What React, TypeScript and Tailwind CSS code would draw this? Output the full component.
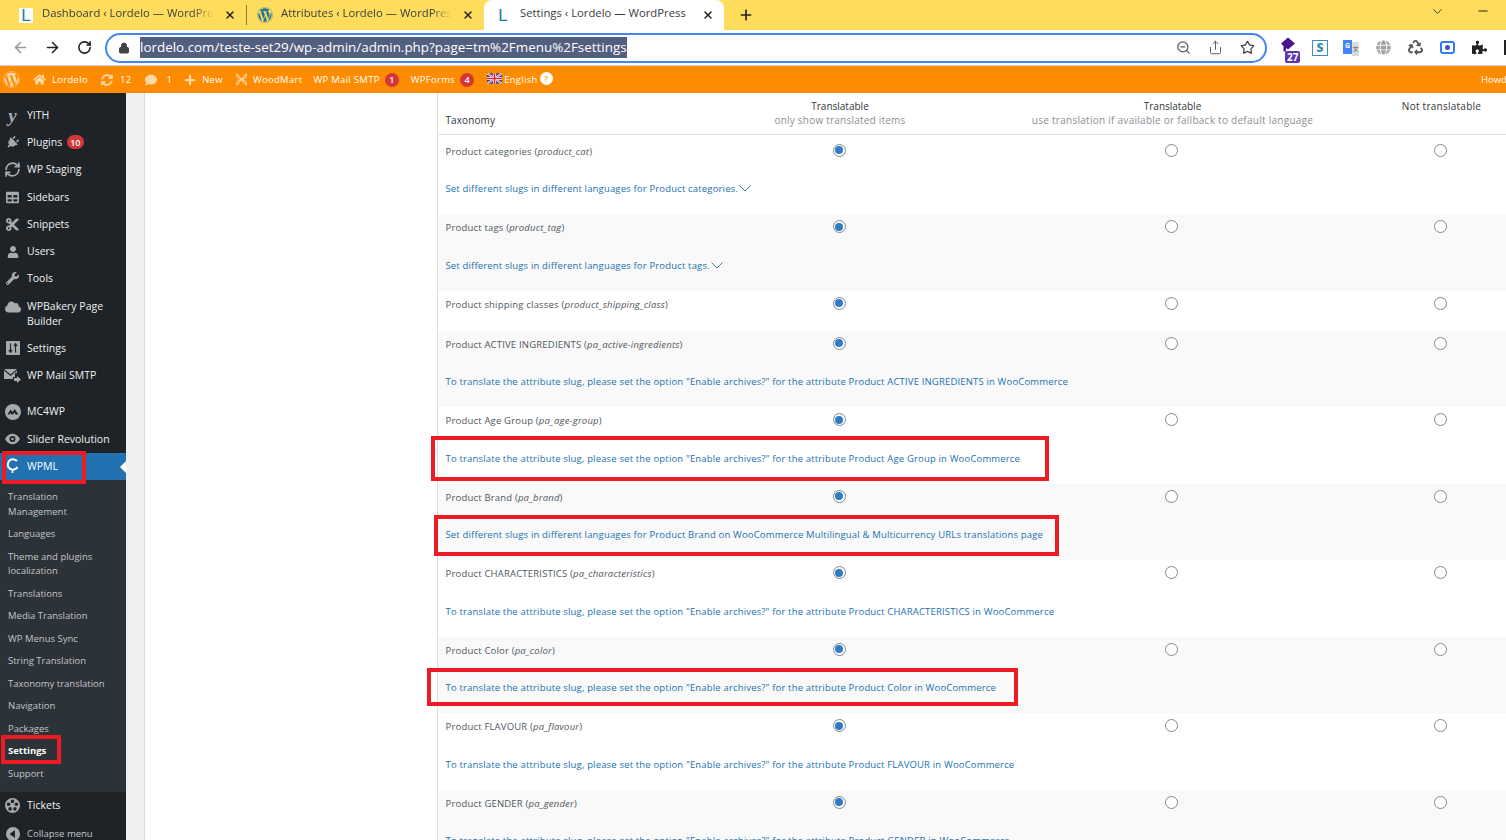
import { ArrowLeft, ArrowRight, RotateCw, RefreshCw, Lock, ZoomOut, Share, Star, X, Plus, ChevronDown, Minus } from "lucide-react"
import {
  FaWordpress, FaHome, FaSyncAlt, FaComment, FaPlus, FaPlug, FaUser, FaWrench, FaCloud, FaCut, FaTable,
  FaPuzzlePiece, FaRecycle, FaGlobe,
} from "react-icons/fa"

const font = { fontFamily: "'Open Sans', sans-serif" }

const rows = [
  { name: "Product categories", slug: "product_cat", link: "Set different slugs in different languages for Product categories.", chevron: true },
  { name: "Product tags", slug: "product_tag", link: "Set different slugs in different languages for Product tags.", chevron: true },
  { name: "Product shipping classes", slug: "product_shipping_class" },
  { name: "Product ACTIVE INGREDIENTS", slug: "pa_active-ingredients", link: 'To translate the attribute slug, please set the option "Enable archives?" for the attribute Product ACTIVE INGREDIENTS in WooCommerce' },
  { name: "Product Age Group", slug: "pa_age-group", link: 'To translate the attribute slug, please set the option "Enable archives?" for the attribute Product Age Group in WooCommerce' },
  { name: "Product Brand", slug: "pa_brand", link: "Set different slugs in different languages for Product Brand on WooCommerce Multilingual & Multicurrency URLs translations page" },
  { name: "Product CHARACTERISTICS", slug: "pa_characteristics", link: 'To translate the attribute slug, please set the option "Enable archives?" for the attribute Product CHARACTERISTICS in WooCommerce' },
  { name: "Product Color", slug: "pa_color", link: 'To translate the attribute slug, please set the option "Enable archives?" for the attribute Product Color in WooCommerce' },
  { name: "Product FLAVOUR", slug: "pa_flavour", link: 'To translate the attribute slug, please set the option "Enable archives?" for the attribute Product FLAVOUR in WooCommerce' },
  { name: "Product GENDER", slug: "pa_gender", link: 'To translate the attribute slug, please set the option "Enable archives?" for the attribute Product GENDER in WooCommerce' },
]

const bgFor = [
  "bg-white", "bg-[#f9f9f9]", "bg-white", "bg-[#f9f9f9]", "bg-white",
  "bg-[#f9f9f9]", "bg-white", "bg-[#f9f9f9]", "bg-white", "bg-[#f9f9f9]",
]

function LogoL({ boxed }: { boxed?: boolean }) {
  return (
    <span className={`flex h-[15px] w-[14px] items-center justify-center text-[17px] leading-none text-[#1b7f9c] ${boxed ? "bg-white" : ""}`} style={{ fontFamily: "'Liberation Sans', sans-serif" }}>
      L
    </span>
  )
}

function Tab({ title, icon, active, w, ml, gap }: { title: string; icon: React.ReactNode; active?: boolean; w: string; ml: string; gap: string }) {
  return (
    <div className={`flex h-[30px] shrink-0 items-center ${w} ${active ? "rounded-t-lg bg-white" : ""}`}>
      <span className={`flex w-[16px] shrink-0 justify-center ${ml} ${gap}`}>{icon}</span>
      <span className={`mb-[3px] flex-1 overflow-hidden whitespace-nowrap text-[11.3px] text-[#3c3c3c] ${active ? "" : "[mask-image:linear-gradient(to_right,black_88%,transparent)]"}`}>{title}</span>
      <X className="mx-[10px] mb-[1px] h-[12px] w-[12px] shrink-0 text-[#222]" strokeWidth={3} />
    </div>
  )
}

function Radio({ checked }: { checked?: boolean }) {
  return (
    <span className="flex h-[13px] w-[13px] items-center justify-center rounded-full border border-[#7e8993] bg-white">
      {checked && <span className="h-[8px] w-[8px] rounded-full bg-[#2f7cc4]" />}
    </span>
  )
}

function Badge({ n }: { n: string }) {
  return <span className="ml-[5px] flex h-[14px] min-w-[14px] items-center justify-center rounded-full bg-[#d63638] px-[3px] text-[9px] font-semibold tracking-normal text-white">{n}</span>
}

function BarItem({ icon, label, ml, badge }: { icon?: React.ReactNode; label: string; ml: string; badge?: string }) {
  return (
    <div className={`flex shrink-0 items-center ${ml}`}>
      {icon}
      <span className="pt-[1px] text-[9.5px] tracking-[0.3px] text-white">{label}</span>
      {badge && <Badge n={badge} />}
    </div>
  )
}

function MenuItem({ icon, label, h = "h-[27.3px]", badge }: { icon: React.ReactNode; label: React.ReactNode; h?: string; badge?: string }) {
  return (
    <div className={`flex items-center ${h}`}>
      <span className="flex w-[27px] shrink-0 justify-center pr-[2px] text-[#a7aaad]">{icon}</span>
      <span className="text-[10.5px] leading-[15px] text-[#f0f0f1]">{label}</span>
      {badge && <Badge n={badge} />}
    </div>
  )
}

function SubItem({ label, current }: { label: React.ReactNode; current?: boolean }) {
  return (
    <div className={`px-[8px] py-[4px] text-[9.5px] leading-[14.5px] ${current ? "font-bold text-white" : "text-[#c3c4c7]"}`}>{label}</div>
  )
}

function RedBox({ className }: { className: string }) {
  return <div className={`pointer-events-none absolute border-[4px] border-[#ed1c24] ${className}`} />
}

function Flag() {
  return (
    <svg viewBox="0 0 16 11" className="h-[11px] w-[15px]">
      <rect width="16" height="11" fill="#2a3f8f" />
      <path d="M0 0L16 11M16 0L0 11" stroke="#fff" strokeWidth="2.2" />
      <path d="M0 0L16 11M16 0L0 11" stroke="#d8243c" strokeWidth="0.8" />
      <path d="M8 0V11M0 5.5H16" stroke="#fff" strokeWidth="3.4" />
      <path d="M8 0V11M0 5.5H16" stroke="#d8243c" strokeWidth="1.8" />
    </svg>
  )
}

function WoodMartIcon() {
  return (
    <svg viewBox="0 0 14 14" className="mr-[5px] h-[13px] w-[13px]" fill="none" stroke="#ffd9a8" strokeWidth="1.1">
      <path d="M2 1C6 5 8 9 12 13M12 1C8 5 6 9 2 13" />
      <path d="M2 1C1 5 3 6 7 7C11 8 13 9 12 13M12 1C13 5 11 6 7 7C3 8 1 9 2 13" />
    </svg>
  )
}

function SmallChevron() {
  return (
    <svg viewBox="0 0 12 7" className="mb-[2px] ml-[1px] h-[7px] w-[12px]" fill="none" stroke="#2271b1" strokeWidth="0.9">
      <path d="M0.5 0.5L6 6L11.5 0.5" />
    </svg>
  )
}

function SettingsIcon() {
  return (
    <svg viewBox="0 0 14 14" className="h-[14px] w-[14px]">
      <rect width="14" height="14" rx="1" fill="#a7aaad" />
      <path d="M4.5 2.5V11M2.8 9L4.5 11.3L6.2 9M9.5 11.5V3M7.8 5L9.5 2.7L11.2 5" fill="none" stroke="#1d2327" strokeWidth="1.2" />
    </svg>
  )
}

function MailIcon() {
  return (
    <svg viewBox="0 0 17 14" className="h-[14px] w-[17px]" fill="#a7aaad">
      <path d="M0 0H13L6.5 5.5Z" />
      <path d="M0 1.6V10H9V8H11V4H13V1.6L6.5 7Z" />
      <path d="M10 9H13V7L17 10.5L13 14V12H10Z" />
    </svg>
  )
}

function Mc4wpIcon() {
  return (
    <svg viewBox="0 0 16 16" className="h-[16px] w-[16px]">
      <circle cx="8" cy="8" r="8" fill="#a7aaad" />
      <path d="M2.5 10.5L5.5 5.5L7.5 8L9.5 5L13.5 10.5H10.5L9.5 8.5L8 10.5H6.5L5.5 9L4.5 10.5Z" fill="#1d2327" />
    </svg>
  )
}

function SliderRevIcon() {
  return (
    <svg viewBox="0 0 18 14" className="h-[14px] w-[17px]" fill="none">
      <path d="M1 7C3.5 3 6 1.5 9 1.5C12 1.5 14.5 3 17 7C14.5 11 12 12.5 9 12.5C6 12.5 3.5 11 1 7Z" fill="#a7aaad" />
      <circle cx="9" cy="7" r="3.2" fill="#1d2327" />
      <circle cx="9" cy="7" r="1.4" fill="#a7aaad" />
    </svg>
  )
}

function WpmlIcon() {
  return (
    <svg viewBox="0 0 14 16" className="h-[16px] w-[14px]" fill="none" stroke="#fff" strokeWidth="2">
      <path d="M11 3.2A5.2 5.2 0 1 0 11.5 9" />
      <path d="M6.5 11.5V15" strokeWidth="1.6" />
    </svg>
  )
}

function TicketsIcon() {
  return (
    <svg viewBox="0 0 16 16" className="h-[15px] w-[15px]">
      <circle cx="8" cy="8" r="8" fill="#a7aaad" />
      <circle cx="8" cy="3.6" r="1.9" fill="#1d2327" />
      <circle cx="12.2" cy="6.6" r="1.9" fill="#1d2327" />
      <circle cx="10.6" cy="11.6" r="1.9" fill="#1d2327" />
      <circle cx="5.4" cy="11.6" r="1.9" fill="#1d2327" />
      <circle cx="3.8" cy="6.6" r="1.9" fill="#1d2327" />
    </svg>
  )
}

function CollapseIcon() {
  return (
    <svg viewBox="0 0 14 14" className="h-[14px] w-[14px]">
      <circle cx="7" cy="7" r="7" fill="#a7aaad" />
      <path d="M9 3V11L3.5 7Z" fill="#1d2327" />
    </svg>
  )
}

function HouseExtIcon() {
  return (
    <div className="relative ml-[13px] h-[22px] w-[21px] shrink-0">
      <svg viewBox="0 0 16 14" className="h-[15px] w-[16px]" fill="#4a148c">
        <path d="M8 0L15 6L8 12L6 10.5V14H3.5V8.5L1 6Z" />
      </svg>
      <span className="absolute bottom-[-4px] left-[5px] rounded-[2px] bg-[#5e35b1] px-[2px] text-[10px] font-bold leading-[12px] text-white">27</span>
    </div>
  )
}

function TranslateExtIcon() {
  return (
    <div className="ml-[15px] flex h-[16px] w-[16px] shrink-0">
      <span className="flex h-[14px] w-[9px] items-center justify-center bg-[#4285f4] text-[7px] font-bold text-white">G</span>
      <span className="mt-[2px] flex h-[14px] w-[7px] items-center justify-center bg-[#dcdcdc] text-[6px] text-[#555]" style={{ fontFamily: "'Noto Sans CJK SC', sans-serif" }}>文</span>
    </div>
  )
}

export default function App() {
  return (
    <div className="relative h-[840px] w-[1506px] overflow-hidden bg-white" style={font}>
      {/* browser tabs */}
      <div className="flex h-[30px] items-center bg-[#ffdd5c]">
        <Tab w="w-[246px]" ml="ml-[18px]" gap="mr-[8px]" title="Dashboard ‹ Lordelo — WordPress" icon={<LogoL boxed />} />
        <div className="h-[20px] w-px shrink-0 bg-[#8a7a3a]" />
        <Tab w="w-[237px]" ml="ml-[10px]" gap="mr-[8px]" title="Attributes ‹ Lordelo — WordPress" icon={<FaWordpress className="h-[16px] w-[16px] text-[#21759b]" />} />
        <Tab active w="w-[240px]" ml="ml-[11px]" gap="mr-[9px]" title="Settings ‹ Lordelo — WordPress" icon={<LogoL />} />
        <Plus className="ml-[14px] h-[16px] w-[16px] text-[#222]" strokeWidth={2.5} />
        <div className="flex-1" />
        <ChevronDown className="mb-[8px] h-[15px] w-[15px] text-[#333]" strokeWidth={1.5} />
        <Minus className="mb-[8px] ml-[31px] mr-[16px] h-[14px] w-[14px] text-[#222]" />
      </div>

      {/* address bar */}
      <div className="flex h-[36px] items-center border-b border-[#d4d4d4] bg-white">
        <ArrowLeft className="ml-[12px] h-[17px] w-[17px] shrink-0 text-[#9a9a9a]" strokeWidth={2.2} />
        <ArrowRight className="ml-[15px] h-[17px] w-[17px] shrink-0 text-[#222]" strokeWidth={2.2} />
        <RotateCw className="ml-[16px] h-[15px] w-[15px] shrink-0 text-[#222]" strokeWidth={2.5} />
        <div className="ml-[13px] flex h-[30px] w-[1162px] shrink-0 items-center rounded-full border-2 border-[#4285f4] bg-white">
          <Lock className="ml-[11px] h-[12px] w-[12px] text-[#444]" fill="#444" />
          <span className="ml-[10px] bg-[#535f80] text-[13.42px] leading-[21px] text-white">lordelo.com/teste-set29/wp-admin/admin.php?page=tm%2Fmenu%2Fsettings</span>
          <div className="flex-1" />
          <ZoomOut className="h-[15px] w-[15px] text-[#555]" />
          <Share className="ml-[17px] h-[15px] w-[15px] text-[#555]" strokeWidth={1.5} />
          <Star className="ml-[17px] mr-[10px] h-[15px] w-[15px] text-[#444]" strokeWidth={2} />
        </div>
        <HouseExtIcon />
        <div className="ml-[11px] flex h-[16px] w-[16px] shrink-0 items-center justify-center border border-[#3d8eb9] text-[12px] font-extrabold leading-none text-[#3d8eb9]">S</div>
        <TranslateExtIcon />
        <FaGlobe className="ml-[17px] h-[15px] w-[15px] shrink-0 text-[#a0a0a0]" />
        <FaRecycle className="ml-[17px] h-[15px] w-[15px] shrink-0 text-[#555]" />
        <div className="ml-[17px] flex h-[13px] w-[15px] shrink-0 items-center justify-center rounded-[3px] border-2 border-[#2f80ed]"><span className="h-[5px] w-[5px] rounded-full bg-[#3f51b5]" /></div>
        <FaPuzzlePiece className="ml-[17px] h-[15px] w-[15px] shrink-0 text-[#222]" />
        <div className="ml-[17px] h-[15px] w-[3px] shrink-0 bg-[#222]" />
      </div>

      {/* admin bar */}
      <div className="flex h-[27px] items-center bg-[#ff8c00]">
        <FaWordpress className="ml-[3px] h-[17px] w-[17px] text-[#ffd9a8]" />
        <BarItem ml="ml-[13px]" icon={<FaHome className="mr-[6px] h-[13px] w-[13px] text-[#ffd9a8]" />} label="Lordelo" />
        <BarItem ml="ml-[13px]" icon={<FaSyncAlt className="mr-[7px] h-[12px] w-[12px] text-[#ffd9a8]" />} label="12" />
        <BarItem ml="ml-[14px]" icon={<FaComment className="mr-[9px] h-[12px] w-[12px] text-[#ffd9a8]" />} label="1" />
        <BarItem ml="ml-[12px]" icon={<FaPlus className="mr-[6px] h-[12px] w-[12px] text-[#ffd9a8]" />} label="New" />
        <BarItem ml="ml-[12px]" icon={<WoodMartIcon />} label="WoodMart" />
        <BarItem ml="ml-[11px]" label="WP Mail SMTP" badge="1" />
        <BarItem ml="ml-[12px]" label="WPForms" badge="4" />
        <div className="mb-[2px] ml-[13px]"><Flag /></div>
        <span className="ml-[2px] pt-[1px] text-[9.5px] tracking-[0.3px] text-white">English</span>
        <span className="mb-[2px] ml-[2px] flex h-[13px] w-[13px] items-center justify-center rounded-full bg-white text-[9px] font-bold text-[#ffb347]">?</span>
        <div className="flex-1" />
        <span className="w-[25px] overflow-hidden whitespace-nowrap pt-[1px] text-[9.5px] text-white">Howdy</span>
      </div>

      <div className="flex h-[747px]">
        {/* wp sidebar */}
        <div className="w-[126px] shrink-0 overflow-hidden bg-[#1d2327] pt-[8.5px]">
          <MenuItem icon={<span className="text-[19px] font-bold italic leading-none" style={{ fontFamily: "'Liberation Serif', serif" }}>y</span>} label="YITH" />
          <MenuItem icon={<FaPlug className="h-[13px] w-[13px] rotate-45" />} label="Plugins" badge="10" />
          <MenuItem icon={<RefreshCw className="h-[17px] w-[17px]" strokeWidth={2.4} />} label="WP Staging" />
          <MenuItem icon={<FaTable className="h-[13px] w-[13px]" />} label="Sidebars" />
          <MenuItem icon={<FaCut className="h-[15px] w-[15px]" />} label="Snippets" />
          <MenuItem icon={<FaUser className="h-[12px] w-[12px]" />} label="Users" />
          <MenuItem icon={<FaWrench className="h-[13px] w-[13px]" />} label="Tools" />
          <MenuItem h="h-[42px]" icon={<FaCloud className="mb-[14px] h-[16px] w-[16px]" />} label={<>WPBakery Page<br />Builder</>} />
          <MenuItem icon={<SettingsIcon />} label="Settings" />
          <MenuItem icon={<MailIcon />} label="WP Mail SMTP" />
          <div className="h-[9px]" />
          <MenuItem icon={<Mc4wpIcon />} label="MC4WP" />
          <MenuItem icon={<SliderRevIcon />} label="Slider Revolution" />
          <div className="relative flex h-[27.3px] items-center bg-[#2271b1]">
            <span className="flex w-[27px] shrink-0 justify-center pr-[2px]"><WpmlIcon /></span>
            <span className="text-[10.5px] text-white">WPML</span>
            <span className="absolute right-0 top-[8px] h-0 w-0 border-y-[6px] border-r-[6px] border-y-transparent border-r-white" />
          </div>
          <div className="bg-[#2c3338] pb-[6.5px] pt-[6.4px]">
            <SubItem label={<>Translation<br />Management</>} />
            <SubItem label="Languages" />
            <SubItem label={<>Theme and plugins<br />localization</>} />
            <SubItem label="Translations" />
            <SubItem label="Media Translation" />
            <SubItem label="WP Menus Sync" />
            <SubItem label="String Translation" />
            <SubItem label="Taxonomy translation" />
            <SubItem label="Navigation" />
            <SubItem label="Packages" />
            <SubItem current label="Settings" />
            <SubItem label="Support" />
          </div>
          <MenuItem icon={<TicketsIcon />} label="Tickets" />
          <div className="flex h-[29px] items-center">
            <span className="flex w-[27px] shrink-0 justify-center pr-[2px]"><CollapseIcon /></span>
            <span className="text-[9.5px] text-[#c3c4c7]">Collapse menu</span>
          </div>
        </div>

        {/* gutter and empty nav column */}
        <div className="w-[18px] shrink-0 bg-[#f0f0f1]" />
        <div className="w-[294px] shrink-0 border-x border-[#dcdcde] bg-white" />

        {/* taxonomy table */}
        <div className="w-[1104px] shrink-0">
          <div className="grid h-[42px] grid-cols-[236px_330px_334px_204px] border-b border-[#e2e4e7]">
            <div className="self-end pb-[7px] pl-[7.5px] text-[10px] leading-[14px] tracking-[0.1px] text-[#32373c]">Taxonomy</div>
            <div className="flex flex-col items-center self-end pb-[7px] pl-[2px] text-[10px] leading-[14px]">
              <span className="text-[#32373c]">Translatable</span>
              <span className="tracking-[0.22px] text-[#8c8f94]">only show translated items</span>
            </div>
            <div className="flex flex-col items-center self-end pb-[7px] pl-[3px] text-[10px] leading-[14px]">
              <span className="text-[#32373c]">Translatable</span>
              <span className="tracking-[0.27px] text-[#8c8f94]">use translation if available or fallback to default language</span>
            </div>
            <div className="flex flex-col items-center pl-[3px] pt-[6px] text-[10px] leading-[14px] tracking-[0.25px] text-[#32373c]">Not translatable</div>
          </div>
          <div className="mt-[2.5px]">
            {rows.map((row, i) => (
              <div key={row.slug} className={`${row.link ? "h-[76.5px]" : "h-[40px]"} ${bgFor[i]} ${i === 0 ? "-mt-[2.5px] box-content pt-[2.5px]" : ""}`}>
                <div className="grid h-[27px] grid-cols-[236px_330px_334px_204px] items-center">
                  <div className="whitespace-nowrap pl-[7.5px] pt-[1.5px] text-[9.5px] tracking-[0.19px] text-[#50575e]">
                    {row.name} (<em>{row.slug}</em>)
                  </div>
                  <div className="mb-[2px] flex justify-center"><Radio checked /></div>
                  <div className="mb-[2px] flex justify-center"><Radio /></div>
                  <div className="mb-[2px] flex justify-center"><Radio /></div>
                </div>
                {row.link && (
                  <div className="mt-[17px] flex h-[16px] items-center whitespace-nowrap pl-[7.5px] text-[9.5px] tracking-[0.165px] text-[#2271b1]">
                    {row.link}
                    {row.chevron && <SmallChevron />}
                  </div>
                )}
              </div>
            ))}
          </div>
        </div>
      </div>

      {/* annotation boxes drawn on the screenshot */}
      <RedBox className="left-[2px] top-[451px] h-[33px] w-[84px]" />
      <RedBox className="left-[1px] top-[735px] h-[29px] w-[60px]" />
      <RedBox className="left-[431px] top-[436px] h-[45px] w-[618px]" />
      <RedBox className="left-[434px] top-[515px] h-[41px] w-[625px]" />
      <RedBox className="left-[427px] top-[668px] h-[38px] w-[591px]" />
    </div>
  )
}
